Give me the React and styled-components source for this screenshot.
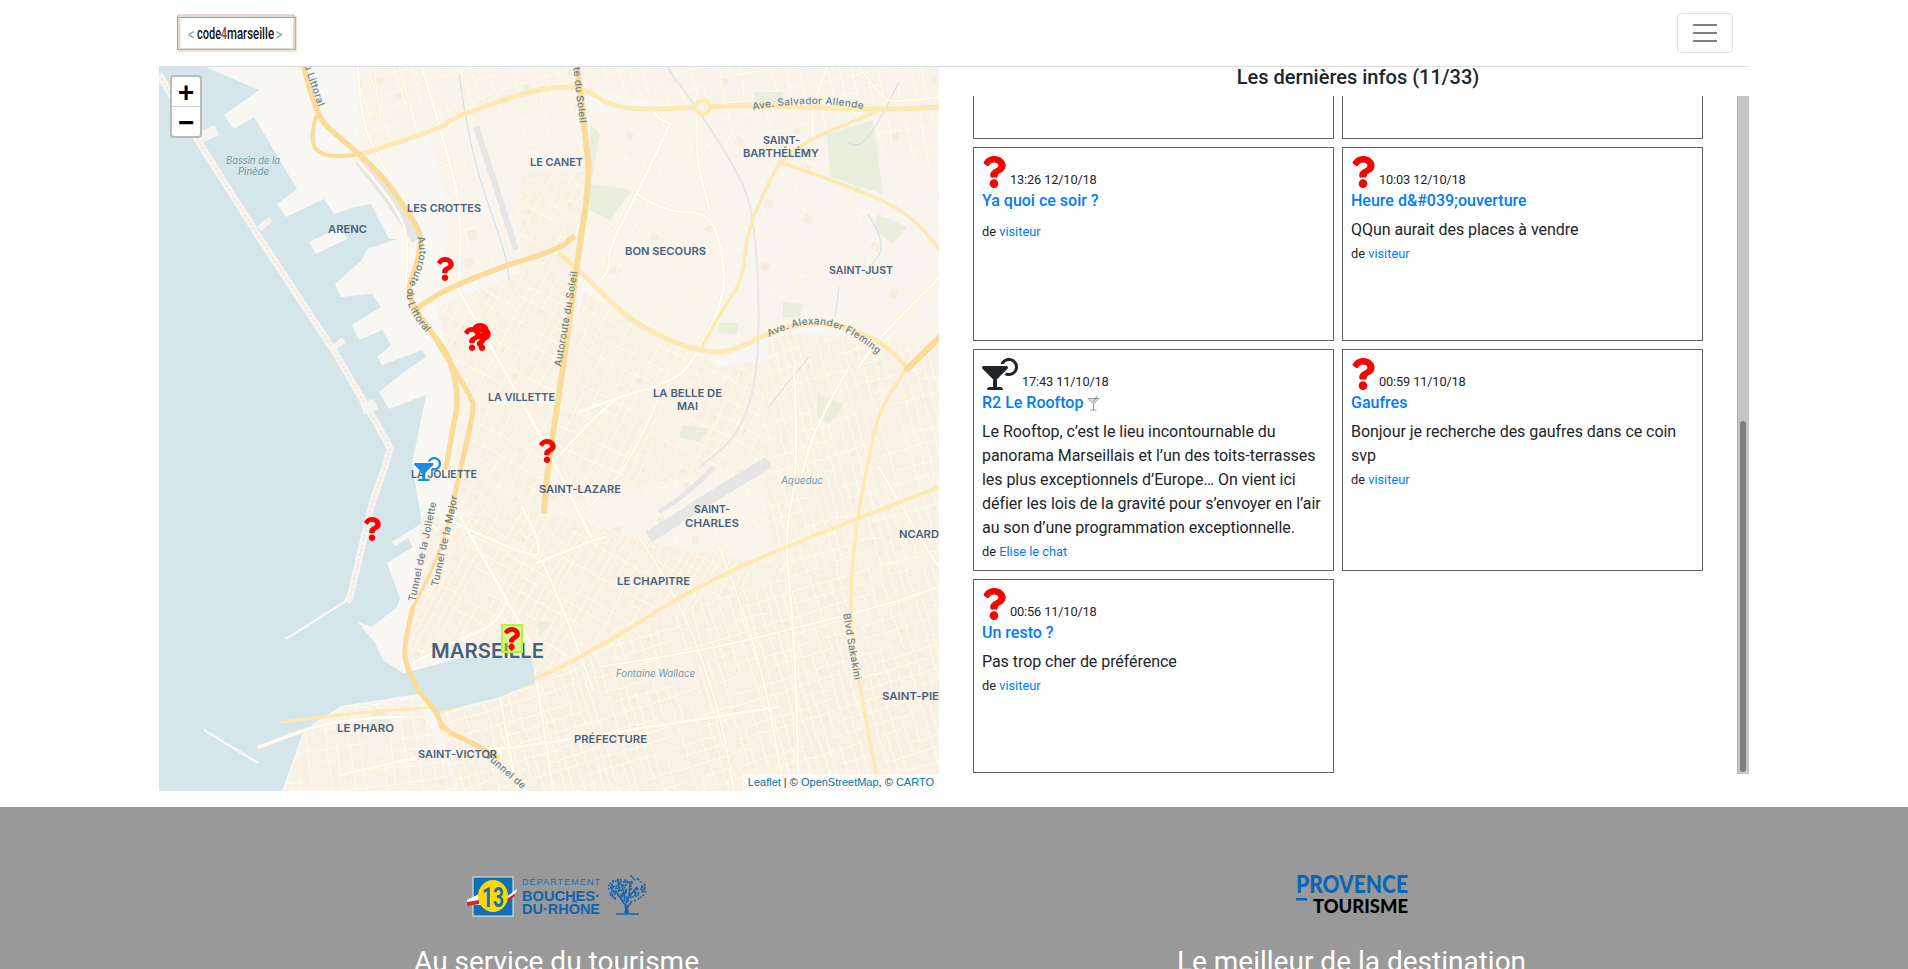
import React from 'react'
import styled, { createGlobalStyle } from 'styled-components'
import { FaQuestion, FaCocktail } from 'react-icons/fa'

const GlobalStyle = createGlobalStyle`
  html, body {
    margin: 0;
    overflow: hidden;
    background: #fff;
    font-family: Roboto, "Liberation Sans", sans-serif;
    font-size: 16px;
    line-height: 24px;
    color: #212529;
  }
  * { box-sizing: border-box; }
  a { color: #007bff; text-decoration: none; }
`

const Wrapper = styled.div`
  width: 1590px;
  margin: 0 auto;
`

const Navbar = styled.nav`
  display: flex;
  align-items: center;
  justify-content: space-between;
  height: 67px;
  padding: 0 16px 0 18px;
  border-bottom: 1px solid #dfdfdf;
`

const Toggler = styled.button`
  display: flex;
  align-items: center;
  justify-content: center;
  width: 56px;
  height: 40px;
  padding: 0;
  background: none;
  border: 1px solid rgba(0, 0, 0, 0.1);
  border-radius: 4px;
`

const Main = styled.main`
  display: flex;
  height: 724px;
`

const MapBox = styled.div`
  position: relative;
  flex: 0 0 780px;
  height: 724px;
  overflow: hidden;
  background: #d4e6ea;
`

const MapArt = styled.svg`
  display: block;
`

const ZoomBar = styled.div`
  position: absolute;
  top: 8px;
  left: 11px;
  width: 32px;
  height: 63px;
  display: flex;
  flex-direction: column;
  background: #fff;
  border: 2px solid #b9bcbc;
  border-radius: 4px;
`

const ZoomButton = styled.a`
  flex: 1;
  display: flex;
  align-items: center;
  justify-content: center;
  color: #000;
  font: bold 26px/1 "DejaVu Sans Mono", "Liberation Mono", monospace;
  & + & { border-top: 1px solid #ccc; }
`

const Attribution = styled.div`
  position: absolute;
  right: 0;
  bottom: 0;
  height: 17px;
  padding: 0 5px;
  background: rgba(255, 255, 255, 0.7);
  color: #333;
  font: 11px/17px "Liberation Sans", Arial, sans-serif;
  a { color: #0078a8; }
`

const Pin = styled.div`
  position: absolute;
  left: ${p => p.$x}px;
  top: ${p => p.$y}px;
  display: flex;
  line-height: 0;
  color: ${p => p.$color || '#ff0000'};
`

const SelectedPin = styled(Pin)`
  width: 22px;
  height: 29px;
  align-items: center;
  justify-content: center;
  background: rgba(173, 255, 47, 0.45);
  border: 2px solid #b4f52f;
`

const QuestionMark = styled(FaQuestion)`
  flex: none;
  width: ${p => p.$h * 0.75}px;
  height: ${p => p.$h}px;
  color: #ff0000;
`

const DrinkMark = styled(FaCocktail)`
  flex: none;
  width: ${p => p.$h * 1.125}px;
  height: ${p => p.$h}px;
`

const Panel = styled.section`
  flex: 0 0 810px;
  padding-left: 28px;
  display: flex;
  flex-direction: column;
`

const PanelTitle = styled.h5`
  height: 29px;
  margin: 0;
  font-size: 20px;
  line-height: 20px;
  font-weight: 500;
  text-align: center;
`

const ListArea = styled.div`
  display: flex;
  height: 678px;
`

const ListViewport = styled.div`
  flex: 1;
  display: flex;
  flex-direction: column;
  justify-content: flex-end;
  overflow: hidden;
`

const ScrollTrack = styled.div`
  flex: 0 0 12px;
  display: flex;
  flex-direction: column;
  justify-content: flex-end;
  padding: 0 3px 2px;
  background: #c3c5c4;
  border-left: 1px solid #adafae;
`

const ScrollThumb = styled.div`
  height: 351px;
  margin-left: -1px;
  background: #7e7e7e;
  border-radius: 3px;
`

const CardGrid = styled.div`
  flex: none;
  display: grid;
  grid-template-columns: 361px 361px;
  gap: 8px;
  padding: 0 0 1px 6px;
`

const Card = styled.article`
  min-height: 194px;
  padding: 8px;
  border: 1px solid #666;
`

const CardHead = styled.div`
  display: flex;
  align-items: flex-end;
  gap: 4px;
  height: 32px;
  margin-bottom: 1px;
  line-height: 0;
`

const When = styled.span`
  font-size: 12.8px;
  line-height: 15px;
  letter-spacing: -0.15px;
  margin-bottom: 1px;
`

const CardTitle = styled.a`
  display: flex;
  align-items: center;
  gap: 4px;
  height: 24px;
  font-weight: 500;
`

const CardBody = styled.p`
  margin: 5px 0 0;
  letter-spacing: -0.05px;
`

const Byline = styled.div`
  margin-top: ${p => (p.$tight ? 7 : 0)}px;
  height: 22px;
  font-size: 12.8px;
`

const Footer = styled.footer`
  margin-top: 16px;
  height: 300px;
  padding: 68px 0 0 159px;
  background: #999;
  display: flex;
`

const FooterCol = styled.div`
  flex: 0 0 795px;
  display: flex;
  flex-direction: column;
  align-items: center;
`

const LogoSlot = styled.div`
  height: 70px;
  line-height: 0;
`

const FooterHeading = styled.h3`
  margin: 0;
  color: #fff;
  font-size: 28px;
  line-height: 34px;
  font-weight: 400;
`

const PlaceLabel = styled.text`
  font-family: Inter, "Liberation Sans", sans-serif;
  font-size: ${p => p.$size || 10.5}px;
  font-weight: 600;
  fill: #46617f;
`

const WaterLabel = styled.text`
  font-family: Inter, "Liberation Sans", sans-serif;
  font-size: 10px;
  font-style: italic;
  fill: #6f9ba9;
`

const RoadLabel = styled.text`
  font-family: Inter, "Liberation Sans", sans-serif;
  font-size: 10px;
  font-weight: 500;
  letter-spacing: 0.3px;
  fill: #6d7f8e;
`

// seeded so the street pattern stays the same on every load
const makeRandom = seed => () => {
  seed = (seed * 16807) % 2147483647
  return seed / 2147483647
}

const smooth = pts => {
  let d = `M${pts[0][0]} ${pts[0][1]}`
  for (let i = 1; i < pts.length - 1; i++) {
    const mx = (pts[i][0] + pts[i + 1][0]) / 2
    const my = (pts[i][1] + pts[i + 1][1]) / 2
    d += `Q${pts[i][0]} ${pts[i][1]} ${mx} ${my}`
  }
  const last = pts[pts.length - 1]
  return `${d}L${last[0]} ${last[1]}`
}

const districts = [
  { poly: '200,0 560,0 560,45 424,22 283,62 200,88', angle: -18, step: 12, tint: '#f9f4eb' },
  { poly: '268,62 430,20 430,170 400,182 280,225 290,150', angle: -15, step: 21, tint: '#f9f5ed' },
  { poly: '362,105 428,105 415,235 395,400 350,350 305,255 360,205', angle: 28, step: 10, tint: '#f9f2e7' },
  { poly: '278,240 400,190 420,230 395,400 385,450 292,445 300,340', angle: 28, step: 10, tint: '#f9f2e7' },
  { poly: '430,45 560,45 560,290 470,255 425,205', angle: 24, step: 16, tint: '#f9f4ec' },
  { poly: '425,225 560,300 620,290 620,400 380,450 395,340', angle: 26, step: 11, tint: '#f9f2e7' },
  { poly: '380,440 620,390 640,520 400,500', angle: -14, step: 16, tint: '#f9f4ec' },
  { poly: '545,0 780,0 780,110 640,75 545,60', angle: -12, step: 14, tint: '#f9f4eb' },
  { poly: '560,60 780,100 780,280 640,255 560,290', angle: 22, step: 19, tint: '#f9f5ee' },
  { poly: '610,265 780,275 780,560 620,520 600,400', angle: -16, step: 10, tint: '#f9f2e7' },
  { poly: '262,450 390,445 510,480 640,500 780,520 780,724 390,724 375,600 300,590 245,595 255,540', angle: 29, step: 9, tint: '#f9f1e5' },
  { poly: '278,650 375,620 460,570 640,500 780,500 780,724 300,724', angle: -17, step: 9, tint: '#f9f1e5' },
  { poly: '125,724 145,665 185,640 258,632 300,724', angle: -8, step: 10, tint: '#f9f2e8' }
]

const districtArt = districts.map((area, index) => {
  const rand = makeRandom(7919 * (index + 3))
  const pts = area.poly.split(' ').map(p => p.split(',').map(Number))
  const cx = pts.reduce((s, p) => s + p[0], 0) / pts.length
  const cy = pts.reduce((s, p) => s + p[1], 0) / pts.length
  const reach = 520
  let streets = ''
  let blocks = ''
  for (let u = -reach; u < reach; u += area.step * (0.7 + rand() * 0.6)) {
    for (let v = -reach; v < reach;) {
      const len = area.step * (1 + rand() * 4)
      const lean = (rand() - 0.5) * area.step * 0.35
      if (rand() < 0.8) streets += `M${(cx + u).toFixed(1)} ${(cy + v).toFixed(1)}l${lean.toFixed(1)} ${len.toFixed(1)}`
      v += len
    }
  }
  for (let v = -reach; v < reach; v += area.step * (1.1 + rand() * 0.8)) {
    for (let u = -reach; u < reach;) {
      const len = area.step * (1 + rand() * 3)
      const lean = (rand() - 0.5) * area.step * 0.35
      if (rand() < 0.7) streets += `M${(cx + u).toFixed(1)} ${(cy + v).toFixed(1)}l${len.toFixed(1)} ${lean.toFixed(1)}`
      if (rand() < 0.25) {
        const side = (area.step * 0.45).toFixed(1)
        blocks += `M${(cx + u + 2).toFixed(1)} ${(cy + v + 2).toFixed(1)}h${side}v${side}h-${side}z`
      }
      u += len
    }
  }
  return { ...area, streets, blocks, cx, cy, id: `district${index}` }
})

const landShape = `M47 0L100 23L65 48L75 62L95 50L138 122L118 137L127 150L165 132L175 147L196 140L212 137L230 172L238 172L208 182L203 193L176 217L182 230L213 227L222 240L193 258L200 273L223 263L232 278L218 290L223 298L263 283L267 290L245 305L220 325L230 342L267 328L253 397
  L263 456L233 475L236 479L249 471L254 480L228 496L241 531L238 540L213 560L199 555L216 576L224 593L244 606L254 604L301 591L373 591L376 615L341 630L278 645L259 627L182 639L145 663L123 724L780 724L780 0Z`

const arencPier = '150,175 182,160 188,172 157,187'

const parks = [
  '431,117 473,123 451,153 431,143',
  '668,67 714,53 724,127 671,110',
  '718,147 748,160 734,177 716,163',
  '658,327 684,337 671,357 658,350',
  '624,235 644,237 641,250 624,250',
  '431,57 441,67 433,110 431,100',
  '378,553 393,556 381,568',
  '595,25 625,25 622,40 596,40',
  '215,640 232,650 225,668 210,660',
  '560,256 580,256 578,268 560,266',
  '524,358 550,362 540,375 520,370'
]

const grayBands = [
  { pts: [[200, 93], [230, 130], [257, 173]], w: 10 },
  { pts: [[317, 60], [337, 120], [357, 183]], w: 6 },
  { pts: [[508, 0], [581, 100], [598, 167], [601, 300], [581, 367], [541, 400]], w: 2 },
  { pts: [[610, 395], [560, 425], [490, 470]], w: 12 },
  { pts: [[555, 400], [530, 425], [500, 445]], w: 5 }
]

const streams = [
  [[300, 7], [310, 83], [347, 187], [350, 213]],
  [[709, 147], [728, 177], [711, 200]],
  [[688, 75], [700, 85], [725, 45], [740, 15]],
  [[680, 220], [676, 250]],
  [[650, 290], [625, 320], [610, 340]]
]

const whiteRoads = [
  { pts: [[263, 0], [293, 100], [302, 150], [300, 213]], w: 3 },
  { pts: [[199, 0], [201, 50], [220, 93], [233, 113]], w: 2.5 },
  { pts: [[215, 0], [222, 60]], w: 1.5 },
  { pts: [[240, 0], [263, 80]], w: 1.5 },
  { pts: [[200, 95], [240, 140], [250, 180], [245, 230], [256, 250]], w: 2.5 },
  { pts: [[280, 190], [317, 253], [377, 360], [397, 400], [432, 470]], w: 3 },
  { pts: [[301, 450], [348, 533], [381, 593]], w: 3.5 },
  { pts: [[348, 533], [341, 556], [298, 573], [254, 596]], w: 3 },
  { pts: [[378, 496], [434, 473], [447, 470]], w: 3 },
  { pts: [[285, 450], [378, 496], [381, 476], [363, 440]], w: 3 },
  { pts: [[384, 496], [401, 533], [434, 623]], w: 2.5 },
  { pts: [[248, 650], [181, 650], [100, 680]], w: 3 },
  { pts: [[181, 708], [258, 690], [314, 681], [341, 683], [471, 663], [620, 640]], w: 3 },
  { pts: [[378, 616], [394, 724]], w: 2.5 },
  { pts: [[341, 630], [358, 724]], w: 2.5 },
  { pts: [[511, 57], [478, 127], [449, 183], [451, 203], [438, 217]], w: 3 },
  { pts: [[478, 127], [504, 145], [551, 145], [564, 187], [566, 230], [538, 287], [518, 313], [460, 330], [420, 345]], w: 3 },
  { pts: [[538, 50], [536, 90], [551, 143]], w: 2.5 },
  { pts: [[494, 40], [496, 50], [511, 57]], w: 2.5 },
  { pts: [[668, 0], [654, 33], [653, 70]], w: 3 },
  { pts: [[700, 0], [722, 30], [735, 35], [781, 30]], w: 2 },
  { pts: [[635, 300], [640, 400], [625, 470], [635, 560], [640, 724]], w: 2.5 },
  { pts: [[690, 300], [655, 360], [640, 420]], w: 2.5 },
  { pts: [[781, 210], [720, 270], [700, 300]], w: 2.5 },
  { pts: [[720, 400], [760, 470], [780, 500]], w: 2.5 },
  { pts: [[390, 400], [430, 355], [460, 330]], w: 2.5 },
  { pts: [[500, 330], [470, 400], [430, 440]], w: 2 },
  { pts: [[480, 470], [520, 530], [560, 640], [575, 724]], w: 2 },
  { pts: [[560, 480], [600, 580], [625, 724]], w: 2 },
  { pts: [[640, 560], [720, 540], [780, 520]], w: 2 },
  { pts: [[440, 600], [540, 585], [640, 560]], w: 2 }
]

const paleRoads = [
  { pts: [[200, 88], [283, 62], [293, 50], [383, 20], [424, 20], [448, 37], [478, 43], [544, 40], [591, 38], [721, 43], [781, 40]], w: 5 },
  { pts: [[721, 43], [674, 63], [651, 72], [621, 95], [614, 107], [588, 163], [584, 213], [563, 243], [541, 283]], w: 3.5 },
  { pts: [[621, 95], [701, 123], [751, 147], [781, 183]], w: 3.5 },
  { pts: [[401, 187], [424, 207], [474, 257], [538, 285], [574, 285], [614, 263], [664, 253], [721, 273], [748, 300]], w: 5 },
  { pts: [[281, 645], [374, 616], [464, 566], [520, 530], [600, 490], [780, 420]], w: 4 },
  { pts: [[123, 655], [200, 645], [290, 640], [374, 617]], w: 3 },
  { pts: [[748, 302], [721, 337], [708, 400], [695, 470], [690, 560], [705, 640], [720, 724]], w: 3.5 }
]

const motorways = [
  { pts: [[145, 0], [157, 50], [180, 70], [223, 107], [257, 157], [263, 173], [257, 200], [247, 227], [270, 263], [290, 287], [300, 330], [293, 367], [287, 400]], w: 5.5 },
  { pts: [[277, 273], [313, 330], [315, 343], [302, 400], [292, 445]], w: 5 },
  { pts: [[157, 50], [150, 75], [165, 90], [197, 88]], w: 4 },
  { pts: [[260, 240], [277, 227], [333, 203], [400, 182], [414, 170]], w: 5.5 },
  { pts: [[418, 0], [426, 67], [431, 110], [421, 177], [414, 227], [404, 300], [394, 367], [389, 400], [385, 444]], w: 6 },
  { pts: [[254, 540], [244, 580], [248, 600], [259, 623], [278, 646], [284, 663], [314, 676], [338, 690]], w: 5 },
  { pts: [[292, 445], [280, 490], [254, 540]], w: 3 },
  { pts: [[748, 302], [781, 270]], w: 6 }
]

const places = [
  { text: 'LES CROTTES', x: 248, y: 145, w: 74 },
  { text: 'ARENC', x: 169, y: 166, w: 39 },
  { text: 'LA VILLETTE', x: 329, y: 334, w: 67 },
  { text: 'LE CANET', x: 371, y: 99, w: 53 },
  { text: 'SAINT-', x: 604, y: 77, w: 37 },
  { text: 'BARTHÉLÉMY', x: 584, y: 90, w: 76 },
  { text: 'BON SECOURS', x: 466, y: 188, w: 81 },
  { text: 'SAINT-JUST', x: 670, y: 207, w: 64 },
  { text: 'LA BELLE DE', x: 494, y: 330, w: 69 },
  { text: 'MAI', x: 518, y: 343, w: 21 },
  { text: 'LA JOLIETTE', x: 252, y: 411, w: 66 },
  { text: 'SAINT-LAZARE', x: 380, y: 426, w: 82 },
  { text: 'SAINT-', x: 535, y: 446, w: 36 },
  { text: 'CHARLES', x: 526, y: 460, w: 54 },
  { text: 'LE CHAPITRE', x: 458, y: 518, w: 73 },
  { text: 'NCARD', x: 740, y: 471, w: 40 },
  { text: 'LE PHARO', x: 178, y: 665, w: 57 },
  { text: 'SAINT-VICTOR', x: 259, y: 691, w: 79 },
  { text: 'PRÉFECTURE', x: 415, y: 676, w: 73 },
  { text: 'SAINT-PIE', x: 723, y: 633, w: 57 }
]

const waters = [
  { text: 'Bassin de la', x: 67, y: 97, w: 54 },
  { text: 'Pinède', x: 79, y: 108, w: 31 },
  { text: 'Fontaine Wallace', x: 457, y: 610, w: 79 },
  { text: 'Aqueduc', x: 622, y: 417, w: 42 }
]

const roadNames = [
  { id: 'rn1', d: 'M143 -8L164 54', text: 'du Littoral' },
  { id: 'rn2', d: 'M258 170C268 205 240 215 250 240C262 265 270 265 278 278', text: 'Autoroute du Littoral' },
  { id: 'rn3', d: 'M412 -16L424 85', text: 'route du Soleil' },
  { id: 'rn4', d: 'M402 300L420 197', text: 'Autoroute du Soleil' },
  { id: 'rn5', d: 'M594 43C640 34 680 36 712 44', text: 'Ave. Salvador Allende' },
  { id: 'rn6', d: 'M610 270C650 250 680 250 728 296', text: 'Ave. Alexander Fleming' },
  { id: 'rn7', d: 'M256 535L282 415', text: 'Tunnel de la Joliette' },
  { id: 'rn8', d: 'M279 520L305 400', text: 'Tunnel de la Major' },
  { id: 'rn9', d: 'M326 690L372 730', text: 'Tunnel de' },
  { id: 'rn10', d: 'M684 547L700 640', text: 'Blvd Sakakini' }
]

const cards = [
  {
    kind: 'question',
    when: '13:26 12/10/18',
    title: 'Ya quoi ce soir ?',
    author: 'visiteur'
  },
  {
    kind: 'question',
    when: '10:03 12/10/18',
    title: 'Heure d&#039;ouverture',
    body: 'QQun aurait des places à vendre',
    author: 'visiteur'
  },
  {
    kind: 'drink',
    when: '17:43 11/10/18',
    title: 'R2 Le Rooftop',
    martini: true,
    body: 'Le Rooftop, c’est le lieu incontournable du panorama Marseillais et l’un des toits-terrasses les plus exceptionnels d’Europe… On vient ici défier les lois de la gravité pour s’envoyer en l’air au son d’une programmation exceptionnelle.',
    author: 'Elise le chat'
  },
  {
    kind: 'question',
    when: '00:59 11/10/18',
    title: 'Gaufres',
    body: 'Bonjour je recherche des gaufres dans ce coin svp',
    author: 'visiteur'
  },
  {
    kind: 'question',
    when: '00:56 11/10/18',
    title: 'Un resto ?',
    body: 'Pas trop cher de préférence',
    author: 'visiteur'
  }
]

const pins = [
  { x: 277, y: 190 },
  { x: 379, y: 372 },
  { x: 204, y: 450 },
  { x: 304, y: 260 },
  { x: 312, y: 256 },
  { x: 314, y: 260 }
]

const MapDrawing = () => (
  <MapArt width="780" height="724" viewBox="0 0 780 724">
    <defs>
      {districtArt.map(a => (
        <clipPath id={a.id} key={a.id}>
          <polygon points={a.poly} />
        </clipPath>
      ))}
      {roadNames.map(r => (
        <path id={r.id} key={r.id} d={r.d} />
      ))}
    </defs>
    <rect width="780" height="724" fill="#d4e6ea" />
    <path d={landShape} fill="#f9f7f3" />
    <polygon points={arencPier} fill="#f9f7f3" />
    <path d="M0 7L38 72L100 170L177 287L227 373L231 382L226 400L214 433L191 530L188 535" fill="none" stroke="#f7f4ee" strokeWidth="7" />
    <path d="M0 7L38 72L100 170L177 287L227 373L231 382L226 400L214 433L191 530" fill="none" stroke="#e8d5d0" strokeWidth="1" strokeDasharray="2 3" />
    <path d="M100 162L112 152M173 282L185 273" stroke="#f7f4ee" strokeWidth="6" fill="none" />
    <path d="M38 72L58 63M203 342L217 337" stroke="#f7f4ee" strokeWidth="11" fill="none" />
    <path d="M127 572L190 532M45 663L99 696" stroke="#f9f7f3" strokeWidth="2.5" fill="none" />
    {districtArt.map(a => (
      <g clipPath={`url(#${a.id})`} key={a.id}>
        <polygon points={a.poly} fill={a.tint} />
        <g transform={`rotate(${a.angle} ${a.cx} ${a.cy})`}>
          <path d={a.blocks} fill="#f6eddf" />
          <path d={a.streets} fill="none" stroke="#fdefd2" strokeWidth="1.8" />
          <path d={a.streets} fill="none" stroke="#fffdf8" strokeWidth="0.9" />
        </g>
      </g>
    ))}
    {parks.map(p => (
      <polygon key={p} points={p} fill="#e9efdc" />
    ))}
    {grayBands.map(b => (
      <path key={b.pts[0].join()} d={smooth(b.pts)} fill="none" stroke="#e6e6e4" strokeWidth={b.w} />
    ))}
    {streams.map(s => (
      <path key={s[0].join()} d={smooth(s)} fill="none" stroke="#c9e0e6" strokeWidth="1" />
    ))}
    {whiteRoads.map(r => (
      <path key={r.pts[0].join()} d={smooth(r.pts)} fill="none" stroke="#fbe8c4" strokeWidth={r.w + 1} strokeLinecap="round" />
    ))}
    {whiteRoads.map(r => (
      <path key={r.pts[0].join()} d={smooth(r.pts)} fill="none" stroke="#fffdf8" strokeWidth={r.w} strokeLinecap="round" />
    ))}
    {paleRoads.map(r => (
      <path key={r.pts[0].join()} d={smooth(r.pts)} fill="none" stroke="#fdeab3" strokeWidth={r.w} strokeLinecap="round" />
    ))}
    {motorways.map(r => (
      <path key={r.pts[0].join()} d={smooth(r.pts)} fill="none" stroke="#fbdb98" strokeWidth={r.w} strokeLinecap="round" />
    ))}
    <circle cx="544" cy="40" r="7" fill="#f9f3e6" stroke="#fdeab3" strokeWidth="4" />
    <path d="M254 604L301 591L373 591L376 615L341 630L278 645L259 627Z" fill="#d4e6ea" />
    <path d="M248 600L259 623L278 646L284 663" fill="none" stroke="#fbdb98" strokeWidth="5" />
    {places.map(p => (
      <PlaceLabel key={p.text + p.x} x={p.x} y={p.y} textLength={p.w} lengthAdjust="spacingAndGlyphs">{p.text}</PlaceLabel>
    ))}
    <PlaceLabel $size={20} x="272" y="591" textLength="113" lengthAdjust="spacingAndGlyphs">MARSEILLE</PlaceLabel>
    {waters.map(w => (
      <WaterLabel key={w.text} x={w.x} y={w.y} textLength={w.w} lengthAdjust="spacingAndGlyphs">{w.text}</WaterLabel>
    ))}
    {roadNames.map(r => (
      <RoadLabel key={r.id}>
        <textPath href={`#${r.id}`}>{r.text}</textPath>
      </RoadLabel>
    ))}
  </MapArt>
)

const SiteLogo = () => (
  <svg width="120" height="38" viewBox="0 0 120 38">
    <rect x="1" y="1" width="116" height="34" fill="#fff" stroke="#e3b2aa" strokeWidth="1" />
    <rect x="2" y="3" width="117" height="34" fill="none" stroke="#e8dcc2" strokeWidth="1.5" />
    <rect x="0.5" y="3.5" width="118" height="32" fill="none" stroke="#7d99aa" strokeWidth="0.8" />
    <rect x="3" y="2" width="115" height="33" fill="none" stroke="#bcd0da" strokeWidth="0.7" />
    <text x="10" y="25" fontFamily="Inter, sans-serif" fontSize="14" fill="#7ba6bd" textLength="8" lengthAdjust="spacingAndGlyphs">&lt;</text>
    <text x="20" y="25" fontFamily="Roboto, sans-serif" fontWeight="500" fontSize="16" fill="#111" textLength="24" lengthAdjust="spacingAndGlyphs">code</text>
    <text x="44" y="25" fontFamily="Roboto, sans-serif" fontWeight="500" fontSize="16" fill="#a8321e" textLength="6" lengthAdjust="spacingAndGlyphs">4</text>
    <text x="50" y="25" fontFamily="Roboto, sans-serif" fontWeight="500" fontSize="16" fill="#111" textLength="47" lengthAdjust="spacingAndGlyphs">marseille</text>
    <text x="98" y="25" fontFamily="Inter, sans-serif" fontSize="14" fill="#7ba6bd" textLength="8" lengthAdjust="spacingAndGlyphs">&gt;</text>
  </svg>
)

const treeDots = (() => {
  const rand = makeRandom(4242)
  const dots = []
  for (let i = 0; i < 130; i++) {
    const a = rand() * Math.PI * 2
    const r = Math.sqrt(rand())
    dots.push([160 + Math.cos(a) * r * 19, 14 + Math.sin(a) * r * 13])
  }
  return dots
})()

const DepartementLogo = () => (
  <svg width="180" height="42" viewBox="0 0 180 42">
    <rect x="6" y="2" width="40" height="39" fill="#0f6fb7" stroke="#e6eef3" strokeWidth="1" />
    <path d="M0 25L14 18L12 23L38 23L50 14L48 20L38 27L12 30L0 29Z" fill="#fff" />
    <path d="M0 27L12 25L12 29L0 31ZM38 25L49 18L47 22L38 28Z" fill="#d8232a" />
    <ellipse cx="26" cy="21" rx="15" ry="16" fill="#ffd800" />
    <text x="15" y="32" fontFamily="Roboto, sans-serif" fontWeight="700" fontSize="28" fill="#0f6fb7" textLength="22" lengthAdjust="spacingAndGlyphs">13</text>
    <text x="55" y="10" fontFamily="'Liberation Sans', sans-serif" fontSize="9" fill="#1d6fb5" textLength="78" lengthAdjust="spacing">DÉPARTEMENT</text>
    <text x="55" y="26" fontFamily="'Liberation Sans', sans-serif" fontWeight="700" fontSize="14" fill="#0f65ad" textLength="78" lengthAdjust="spacingAndGlyphs">BOUCHES·</text>
    <text x="55" y="39" fontFamily="'Liberation Sans', sans-serif" fontWeight="700" fontSize="14" fill="#0f65ad" textLength="78" lengthAdjust="spacingAndGlyphs">DU·RHÔNE</text>
    <path d="M149 39H172M160 39L158 30L150 18M158 30L162 22L170 12M160 33L165 26M158 24L155 10M162 22L163 8" fill="none" stroke="#1766ae" strokeWidth="1.5" />
    <path d="M157 38L160 28L162 38Z" fill="#1766ae" />
    {treeDots.map(d => (
      <circle key={d.join()} cx={d[0]} cy={d[1]} r="1" fill="#1766ae" />
    ))}
  </svg>
)

const ProvenceLogo = () => (
  <svg width="112" height="39" viewBox="0 0 112 39">
    <text x="0" y="18" fontFamily="Lato, sans-serif" fontWeight="900" fontSize="24" fill="#0b66b8" textLength="112" lengthAdjust="spacingAndGlyphs">PROVENCE</text>
    <rect x="0" y="23" width="11" height="2.5" fill="#0b66b8" />
    <text x="17" y="38" fontFamily="Lato, sans-serif" fontWeight="900" fontSize="18" fill="#000" textLength="95" lengthAdjust="spacingAndGlyphs">TOURISME</text>
  </svg>
)

const MartiniGlass = () => (
  <svg width="14" height="16" viewBox="0 0 14 16">
    <path d="M1 3.5H12L6.5 9Z" fill="#dfe5dc" stroke="#8d9490" strokeWidth="0.8" />
    <path d="M6.5 9V14.5M3.5 15H9.5" fill="none" stroke="#8d9490" strokeWidth="1" />
    <path d="M6 7L10.5 1" stroke="#7d5a3a" strokeWidth="0.7" />
    <circle cx="8.5" cy="3.5" r="1.1" fill="#7f9a3c" />
  </svg>
)

const NewsCard = ({ card }) => (
  <Card>
    <CardHead>
      {card.kind === 'drink' ? <DrinkMark $h={32} /> : <QuestionMark $h={32} />}
      <When>{card.when}</When>
    </CardHead>
    <CardTitle href="#">
      {card.title}
      {card.martini && <MartiniGlass />}
    </CardTitle>
    {card.body && <CardBody>{card.body}</CardBody>}
    <Byline $tight={!card.body}>de <a href="#">{card.author}</a></Byline>
  </Card>
)

const App = () => (
  <>
    <GlobalStyle />
    <Wrapper>
      <Navbar>
        <SiteLogo />
        <Toggler aria-label="Menu">
          <svg width="30" height="30" viewBox="0 0 30 30">
            <path d="M3 7h24M3 15h24M3 23h24" stroke="rgba(0,0,0,.5)" strokeWidth="2" />
          </svg>
        </Toggler>
      </Navbar>
      <Main>
        <MapBox>
          <MapDrawing />
          {pins.map(p => (
            <Pin key={`${p.x}-${p.y}`} $x={p.x} $y={p.y}>
              <QuestionMark $h={24} />
            </Pin>
          ))}
          <Pin $x={255} $y={390} $color="#168de2">
            <DrinkMark $h={24} />
          </Pin>
          <SelectedPin $x={342} $y={557}>
            <QuestionMark $h={23} />
          </SelectedPin>
          <ZoomBar>
            <ZoomButton>+</ZoomButton>
            <ZoomButton>−</ZoomButton>
          </ZoomBar>
          <Attribution>
            <a href="#">Leaflet</a> | © <a href="#">OpenStreetMap</a>, © <a href="#">CARTO</a>
          </Attribution>
        </MapBox>
        <Panel>
          <PanelTitle>Les dernières infos (11/33)</PanelTitle>
          <ListArea>
            <ListViewport>
              <CardGrid>
                <Card />
                <Card />
                {cards.map(card => (
                  <NewsCard key={card.when} card={card} />
                ))}
              </CardGrid>
            </ListViewport>
            <ScrollTrack>
              <ScrollThumb />
            </ScrollTrack>
          </ListArea>
        </Panel>
      </Main>
    </Wrapper>
    <Footer>
      <FooterCol>
        <LogoSlot><DepartementLogo /></LogoSlot>
        <FooterHeading>Au service du tourisme</FooterHeading>
      </FooterCol>
      <FooterCol>
        <LogoSlot><ProvenceLogo /></LogoSlot>
        <FooterHeading>Le meilleur de la destination</FooterHeading>
      </FooterCol>
    </Footer>
  </>
)

export default App
